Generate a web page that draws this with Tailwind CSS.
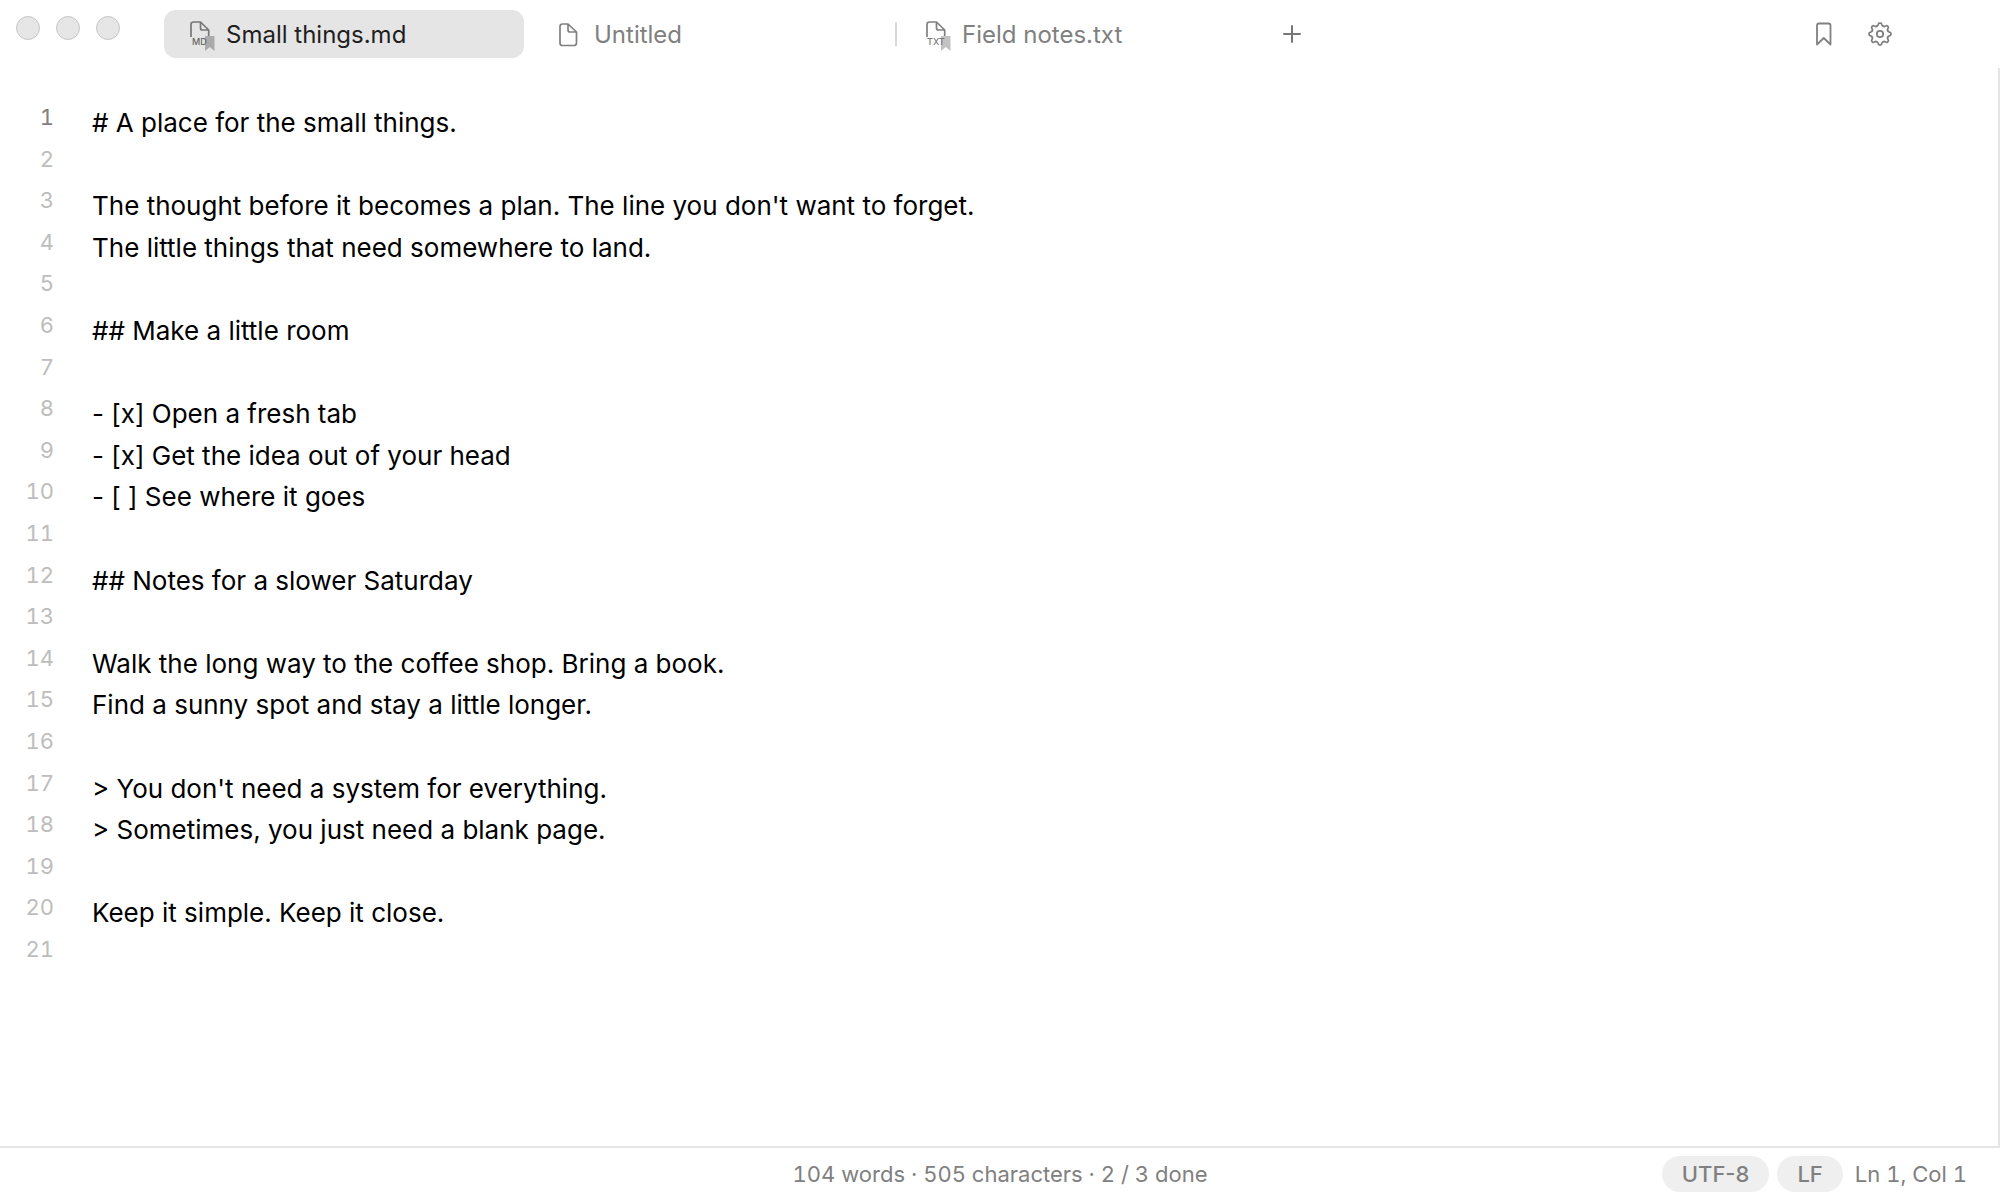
<!DOCTYPE html>
<html lang="en">
<head>
  <meta charset="UTF-8" />
  <meta name="viewport" content="width=device-width, initial-scale=1.0" />
  <title>Small things.md</title>
  <script src="https://cdn.jsdelivr.net/npm/@tailwindcss/browser@4"></script>
</head>

<body class="flex h-screen flex-col bg-white font-['Inter',sans-serif] text-[#808080]">
  <!-- Title bar -->
  <header class="flex h-[68px] shrink-0 items-start pt-[10px] pr-[108px] pl-4">
    <div class="mt-[6px] mr-[44px] flex gap-4">
      <button aria-label="Close" class="size-6 rounded-full border border-[#c6c6c6] bg-[#e6e6e6]"></button>
      <button aria-label="Minimize" class="size-6 rounded-full border border-[#c6c6c6] bg-[#e6e6e6]"></button>
      <button aria-label="Zoom" class="size-6 rounded-full border border-[#c6c6c6] bg-[#e6e6e6]"></button>
    </div>

    <!-- Tabs -->
    <nav class="flex h-12 items-center text-2xl">
      <button class="flex h-12 w-[360px] items-center gap-[10px] rounded-xl bg-[#e5e5e5] pt-0.5 pl-6 text-[#1f1f1f]">
        <svg class="h-8 w-7 shrink-0" viewBox="0 0 28 32" fill="none">
          <path d="M3 18V5.500Q3 3 5.500 3H12.500L20.700 11V17M12.500 3V9Q12.500 11 14.500 11H20.500" stroke="#777" stroke-width="1.700" stroke-linejoin="round" />
          <path d="M17 17H26.500V32L21.750 28L17 32Z" fill="#aaa" />
          <text x="4" y="26" font-size="9" font-weight="500" fill="#666">MD</text>
        </svg>
        Small things.md
      </button>
      <button class="ml-2 flex h-12 w-[360px] items-center gap-[10px] pt-0.5 pl-6">
        <svg class="h-8 w-7 shrink-0" viewBox="0 0 28 32" fill="none" stroke="#808080" stroke-width="1.700" stroke-linejoin="round">
          <path d="M12 5H6.500Q4 5 4 7.500V24Q4 26.500 6.500 26.500H18Q20.500 26.500 20.500 24V13ZM12 5V11Q12 13 14 13H20.500" />
        </svg>
        Untitled
      </button>
      <span class="mx-[3px] h-6 w-[2px] bg-[#d9d9d9]"></span>
      <button class="flex h-12 w-[360px] items-center gap-[10px] pt-0.5 pl-6">
        <svg class="h-8 w-7 shrink-0" viewBox="0 0 28 32" fill="none">
          <path d="M3 18V5.500Q3 3 5.500 3H12.500L20.700 11V17M12.500 3V9Q12.500 11 14.500 11H20.500" stroke="#808080" stroke-width="1.700" stroke-linejoin="round" />
          <path d="M17 17H26.500V32L21.750 28L17 32Z" fill="#c2c2c2" />
          <text x="3" y="26" font-size="9" font-weight="500" fill="#777">TXT</text>
        </svg>
        Field notes.txt
      </button>
      <button aria-label="New tab" class="ml-5 flex h-12 w-6 items-center justify-center">
        <svg class="size-5" viewBox="0 0 20 20" fill="none" stroke="#777" stroke-width="2" stroke-linecap="round">
          <path d="M10 2V18M2 10H18" />
        </svg>
      </button>
    </nav>

    <div class="ml-auto flex h-12 items-center gap-8">
      <button aria-label="Bookmarks">
        <svg class="size-6" viewBox="0 0 24 24" fill="none" stroke="#808080" stroke-width="1.800" stroke-linejoin="round">
          <path d="M5 22.500V3.500Q5 1.500 7 1.500H16.500Q18.500 1.500 18.500 3.500V22.500L11.750 16Z" />
        </svg>
      </button>
      <button aria-label="Settings">
        <svg class="size-6" viewBox="0 0 24 24" fill="none" stroke="#808080" stroke-width="1.800" stroke-linecap="round">
          <defs>
            <path id="tooth" d="M8.800 4.240C9.700 3.900 10.100 3.400 10.200 2.700Q10.400 1.100 11.400 1.100H12.600Q13.600 1.100 13.800 2.700C13.900 3.400 14.300 3.900 15.200 4.240" />
          </defs>
          <use href="#tooth" />
          <use href="#tooth" transform="rotate(45 12 12)" />
          <use href="#tooth" transform="rotate(90 12 12)" />
          <use href="#tooth" transform="rotate(135 12 12)" />
          <use href="#tooth" transform="rotate(180 12 12)" />
          <use href="#tooth" transform="rotate(225 12 12)" />
          <use href="#tooth" transform="rotate(270 12 12)" />
          <use href="#tooth" transform="rotate(315 12 12)" />
          <circle cx="12" cy="12" r="3.200" />
        </svg>
      </button>
    </div>
  </header>

  <!-- Editor -->
  <main class="flex min-h-0 flex-1 border-r-2 border-[#e5e5e5] text-[26px] leading-[1.6em]">
    <ol class="w-[54px] shrink-0 pt-[29px] text-right text-[22px] text-[#bdbdbd] tabular-nums">
      <li class="text-[#808080]">1</li>
      <li>2</li>
      <li>3</li>
      <li>4</li>
      <li>5</li>
      <li>6</li>
      <li>7</li>
      <li>8</li>
      <li>9</li>
      <li>10</li>
      <li>11</li>
      <li>12</li>
      <li>13</li>
      <li>14</li>
      <li>15</li>
      <li>16</li>
      <li>17</li>
      <li>18</li>
      <li>19</li>
      <li>20</li>
      <li>21</li>
    </ol>
    <textarea aria-label="Document text" spellcheck="false" class="flex-1 resize-none pt-[34px] pl-[38px] text-[26px] text-black outline-none"># A place for the small things.

The thought before it becomes a plan. The line you don't want to forget.
The little things that need somewhere to land.

## Make a little room

- [x] Open a fresh tab
- [x] Get the idea out of your head
- [ ] See where it goes

## Notes for a slower Saturday

Walk the long way to the coffee shop. Bring a book.
Find a sunny spot and stay a little longer.

> You don't need a system for everything.
> Sometimes, you just need a blank page.

Keep it simple. Keep it close.
</textarea>
  </main>

  <!-- Status bar -->
  <footer class="grid h-[54px] shrink-0 grid-cols-[1fr_auto_1fr] items-center border-t-2 border-[#e5e5e5] text-[22px] tabular-nums">
    <p class="col-start-2">104 words · 505 characters · 2 / 3 done</p>
    <div class="flex items-center justify-end gap-2 pr-[33px]">
      <button class="h-9 rounded-full bg-[#efefef] px-5 font-medium normal-nums">UTF-8</button>
      <button class="h-9 rounded-full bg-[#efefef] px-5 font-medium">LF</button>
      <span class="pl-1">Ln 1, Col 1</span>
    </div>
  </footer>
</body>
</html>
